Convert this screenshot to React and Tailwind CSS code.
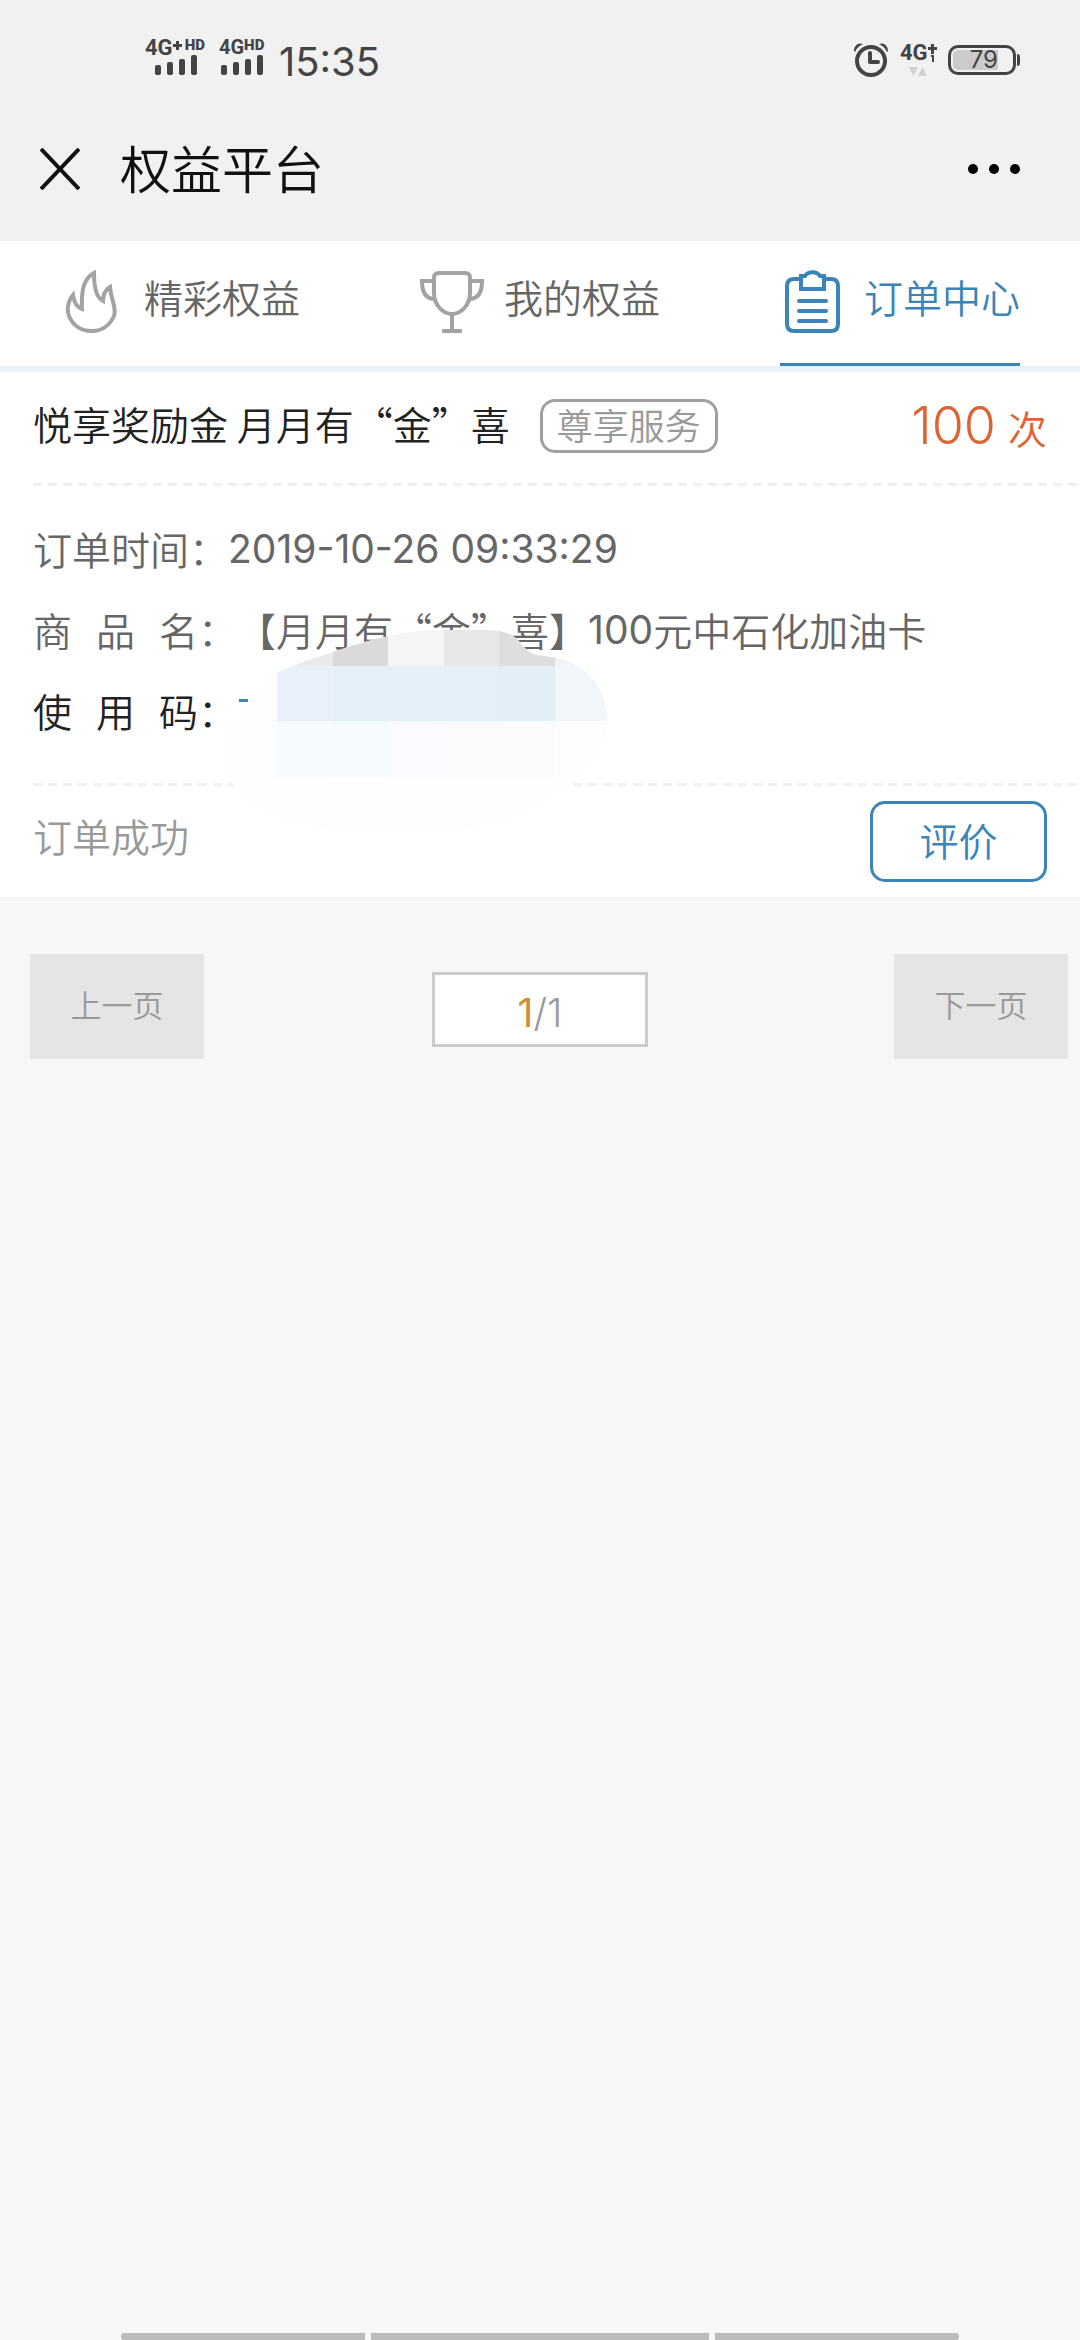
import React, { useState } from "react";

function SignalBars() {
  return (
    <svg width="42" height="20" viewBox="0 0 42 20" fill="#444" aria-hidden="true">
      <rect x="0" y="10" width="6" height="10" rx="2" />
      <rect x="12" y="7" width="6" height="13" rx="2" />
      <rect x="24" y="4" width="6" height="16" rx="2" />
      <rect x="36" y="0" width="6" height="20" rx="2" />
    </svg>
  );
}

function AlarmIcon() {
  return (
    <svg width="34" height="36" viewBox="0 0 34 36" fill="none" stroke="#444" aria-hidden="true">
      <circle cx="17" cy="19" r="14" strokeWidth="4" />
      <path d="M16 11v9h8" strokeWidth="4" strokeLinecap="round" strokeLinejoin="round" />
      <path d="M0 9C0 4 4 0 9 2C5 4 3 6 1 10z" fill="#444" stroke="none" />
      <path d="M34 9C34 4 30 0 25 2C29 4 31 6 33 10z" fill="#444" stroke="none" />
    </svg>
  );
}

function FlameIcon() {
  return (
    <svg width="64" height="64" viewBox="0 0 64 64" fill="none" stroke="#a3a3a3" strokeWidth="4" aria-hidden="true">
      <path d="M34 3C25 8 21 17 22 39C16 37 14 32 13 25C7 32 7 41 9 46C13 56 22 61 32 61C42 61 50 55 54 46C57 37 51 31 50 17C45 20 43 24 43 31C37 28 34 18 34 3z" />
    </svg>
  );
}

function TrophyIcon() {
  return (
    <svg width="64" height="64" viewBox="0 0 64 64" fill="none" stroke="#a3a3a3" strokeWidth="4" aria-hidden="true">
      <path d="M19 3h26q5 0 5 5v15c0 12-9 21-18 21s-18-9-18-21V8q0-5 5-5z" />
      <path d="M14 11H2c0 11 4 18 13 18M50 11h12c0 11-4 18-13 18" />
      <path d="M32 44v17M22 61h20" />
    </svg>
  );
}

function ClipboardIcon() {
  return (
    <svg width="64" height="64" viewBox="0 0 64 64" fill="none" stroke="#3a84b9" strokeWidth="4" aria-hidden="true">
      <path d="M21 9h-7q-7 0-7 7v38q0 7 7 7h37q7 0 7-7V16q0-7-7-7h-7" />
      <path d="M21 6h4c3-5 12-5 15 0h4v13H21z" />
      <path d="M19 31h27M19 41h27M19 51h27" strokeLinecap="round" />
    </svg>
  );
}

// the use code is hidden behind a mosaic
function Mosaic() {
  return (
    <svg
      className="absolute left-[228px] top-[142px]"
      width="382"
      height="208"
      viewBox="228 628 382 208"
      aria-hidden="true"
    >
      <clipPath id="blob">
        <path d="M230 777V735C234 718 244 706 262 688Q268 680 277 673Q300 662 333 652Q370 639 400 634Q420 630 444 630H485C505 630 515 635 522 645Q528 652 536 655Q548 656 557 658C590 666 607 690 607 721C607 745 595 765 570 777C560 805 500 834 400 834C300 834 245 815 230 777z" />
      </clipPath>
      <g clipPath="url(#blob)">
        <rect x="228" y="628" width="382" height="208" fill="#fefefe" />
        <rect x="277" y="628" width="56" height="38" fill="#e9ebeb" />
        <rect x="333" y="628" width="55" height="38" fill="#dadada" />
        <rect x="388" y="628" width="56" height="38" fill="#f5f5f5" />
        <rect x="444" y="628" width="55" height="38" fill="#e7e7e7" />
        <rect x="499" y="628" width="56" height="38" fill="#dedede" />
        <rect x="555" y="628" width="55" height="38" fill="#f0f3f7" />
        <rect x="277" y="666" width="56" height="55" fill="#e8f0f9" />
        <rect x="333" y="666" width="55" height="55" fill="#e4f0f8" />
        <rect x="388" y="666" width="111" height="55" fill="#e4f0f7" />
        <rect x="499" y="666" width="56" height="55" fill="#e2eff6" />
        <rect x="555" y="666" width="55" height="55" fill="#f1f6fb" />
        <rect x="228" y="721" width="49" height="56" fill="#fbfdfe" />
        <rect x="277" y="721" width="56" height="56" fill="#f8fbfe" />
        <rect x="333" y="721" width="55" height="56" fill="#f5faff" />
        <rect x="388" y="721" width="56" height="56" fill="#f9fbfe" />
        <rect x="444" y="721" width="111" height="56" fill="#fafbfd" />
        <rect x="555" y="721" width="55" height="56" fill="#fbfdff" />
      </g>
    </svg>
  );
}

function Divider() {
  return (
    <div className="ml-[33px] h-[3px] bg-[repeating-linear-gradient(90deg,#edf1f1_0_9px,transparent_9px_15px)]" />
  );
}

const tabs = [
  { name: "精彩权益", icon: <FlameIcon /> },
  { name: "我的权益", icon: <TrophyIcon /> },
  { name: "订单中心", icon: <ClipboardIcon /> },
];

function App() {
  const [active, setActive] = useState("订单中心");

  return (
    <div
      lang="zh-CN"
      className="min-h-screen flex flex-col bg-[#f7f7f7] font-[family-name:'Noto_Sans_CJK_SC',sans-serif] font-[350] text-[39px]"
    >
      <header className="bg-[#f1f1f1]">
        <div className="h-[98px] pt-[38px] pl-[145px] pr-[60px] flex items-start justify-between text-[#444]">
          <div className="flex items-start">
            <div className="w-[74px]">
              <div className="h-[17px] flex items-start font-[family-name:'Roboto',sans-serif] font-bold">
                <span className="text-[22px] leading-[20px]">4G</span>
                <svg className="mt-[3px]" width="9" height="9" viewBox="0 0 9 9" fill="#444" aria-hidden="true">
                  <path d="M3 0h3v3h3v3H6v3H3V6H0V3h3z" />
                </svg>
                <span className="ml-[3px] text-[15px] leading-[14px] font-black">HD</span>
              </div>
              <div className="pl-[10px]">
                <SignalBars />
              </div>
            </div>
            <div className="w-[60px]">
              <div className="h-[17px] flex items-start font-[family-name:'Roboto',sans-serif] font-bold">
                <span className="text-[20px] leading-[18px]">4G</span>
                <span className="text-[15px] leading-[14px] font-black">HD</span>
              </div>
              <div className="pl-[2px]">
                <SignalBars />
              </div>
            </div>
            <span className="font-[family-name:'Inter',sans-serif] font-normal text-[40px] leading-[48px]">15:35</span>
          </div>
          <div className="pt-[4px] flex items-start">
            <AlarmIcon />
            <div className="ml-3 w-[48px] font-[family-name:'Roboto',sans-serif] font-bold">
              <div className="h-[25px] flex items-start">
                <span className="text-[22px] leading-[22px]">4G</span>
                <svg width="9" height="20" viewBox="0 0 9 20" fill="#444" aria-hidden="true">
                  <path d="M3 2h3v3h3v3H6v4H3V8H0V5h3zM3 13h3v7H4v-5H3z" />
                </svg>
              </div>
              <svg className="ml-[9px]" width="18" height="9" viewBox="0 0 18 9" fill="#d0d0d0" aria-hidden="true">
                <path d="M0 0h9L4.500 9zM9 9h9L13.500 0z" />
              </svg>
            </div>
            <div className="mt-[3px] flex items-center">
              <div className="w-[68px] h-[30px] rounded-[10px] border-[3px] border-[#444] p-[2px]">
                <div className="w-[45px] h-[20px] rounded-l-[5px] bg-[#cbcbcb] flex items-center justify-end font-[family-name:'Inter',sans-serif] font-normal text-[24px] leading-[20px]">
                  79
                </div>
              </div>
              <div className="ml-px w-[3px] h-[12px] rounded-r-[3px] bg-[#444]" />
            </div>
          </div>
        </div>
        <div className="h-[143px] pb-[2px] pl-[40px] pr-[60px] flex items-center text-[#111]">
          <button type="button" aria-label="关闭">
            <svg width="40" height="42" viewBox="0 0 40 42" stroke="#111" strokeWidth="4" aria-hidden="true">
              <path d="M1 1L39 41M39 1L1 41" />
            </svg>
          </button>
          <h1 className="ml-[40px] pb-[2px] text-[51px] font-[350]">权益平台</h1>
          <button type="button" aria-label="更多" className="ml-auto">
            <svg width="52" height="10" viewBox="0 0 52 10" fill="#000" aria-hidden="true">
              <circle cx="5" cy="5" r="5" />
              <circle cx="26" cy="5" r="5" />
              <circle cx="47" cy="5" r="5" />
            </svg>
          </button>
        </div>
      </header>

      <nav className="grid grid-cols-3 bg-white border-b-[6px] border-[#ecf1f5]">
        {tabs.map((tab) => (
          <a
            key={tab.name}
            href="#"
            onClick={() => setActive(tab.name)}
            className={
              active === tab.name
                ? "mx-[60px] h-[125px] flex items-center justify-between border-b-[3px] border-[#3a84b9] text-[#3a84b9]"
                : "mx-[60px] h-[125px] flex items-center justify-between border-b-[3px] border-transparent text-[#666]"
            }
          >
            {tab.icon}
            <span className="pb-3">{tab.name}</span>
          </a>
        ))}
      </nav>

      <section className="bg-white border-b-[3px] border-[#eff4f4]">
        <div className="h-[111px] pb-1 px-[33px] flex items-center">
          <h2 className="pb-1 font-[350] text-[#222]">悦享奖励金 月月有“金”喜</h2>
          <span className="ml-[30px] h-[54px] px-[14px] pb-1 flex items-center rounded-[15px] border-[3px] border-[#a0a0a0] text-[36px] text-[#999]">
            尊享服务
          </span>
          <p className="ml-auto flex items-baseline text-[#dc6434]">
            <span className="mr-3 font-[family-name:'Inter',sans-serif] text-[52px]">100</span>次
          </p>
        </div>
        <Divider />
        <div className="relative pt-[22px] pb-8 pl-[33px] leading-[81px] text-[#666]">
          <div className="flex">
            <span>订单时间：</span>
            <span className="font-[family-name:'Inter',sans-serif] font-normal">2019-10-26 09:33:29</span>
          </div>
          <div className="flex">
            <span className="flex gap-6">
              <span>商</span>
              <span>品</span>
              <span>名：</span>
            </span>
            <span className="flex">
              <span>【月月有“金”喜】</span>
              <span className="font-[family-name:'Inter',sans-serif] font-normal">100</span>
              <span>元中石化加油卡</span>
            </span>
          </div>
          <div className="flex items-center text-[#222]">
            <span className="flex gap-6">
              <span>使</span>
              <span>用</span>
              <span>码：</span>
            </span>
            <span className="mb-5 ml-[2px] w-[9px] h-[3px] bg-[#3a84b9]" />
          </div>
          <Mosaic />
        </div>
        <Divider />
        <div className="h-[111px] px-[33px] flex items-center justify-between">
          <span className="pb-3 text-[#999]">订单成功</span>
          <button
            type="button"
            className="w-[177px] h-[81px] pb-1 rounded-[15px] border-[3px] border-[#3a84b9] text-[#3a84b9]"
          >
            评价
          </button>
        </div>
      </section>

      <div className="pt-[54px] pl-[30px] pr-3 flex items-start justify-between">
        <button type="button" className="w-[174px] h-[105px] pb-1 bg-[#e5e5e5] text-[31px] text-[#999]">
          上一页
        </button>
        <div className="mt-[18px] mr-[18px] w-[216px] h-[75px] pt-2 flex items-center justify-center border-[3px] border-[#ccc] bg-white font-[family-name:'Inter',sans-serif] text-[#999]">
          <span className="font-normal text-[#d08b36]">1</span>/1
        </div>
        <button type="button" className="w-[174px] h-[105px] pb-1 bg-[#e5e5e5] text-[31px] text-[#999]">
          下一页
        </button>
      </div>

      <div className="mt-auto h-[7px] px-[121px] flex gap-[6px]">
        <div className="basis-0 grow-[244] rounded-l-[3px] bg-[#bbb]" />
        <div className="basis-0 grow-[338] bg-[#bbb]" />
        <div className="basis-0 grow-[244] rounded-r-[3px] bg-[#bbb]" />
      </div>
    </div>
  );
}

export default App;
